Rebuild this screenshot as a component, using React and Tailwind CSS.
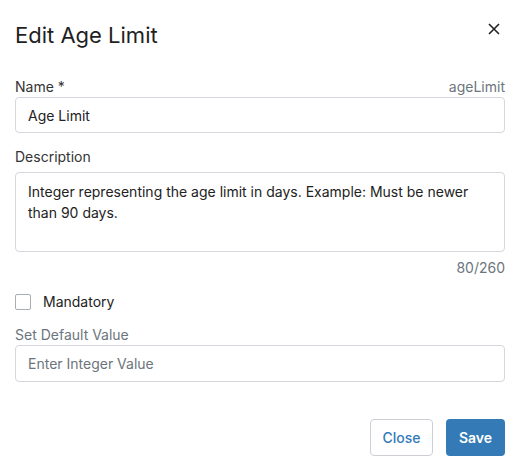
import { useState } from 'react';

const App = () => {
  const [name, setName] = useState('Age Limit');
  const [description, setDescription] = useState(
    'Integer representing the age limit in days. Example: Must be newer than 90 days.'
  );
  const [mandatory, setMandatory] = useState(false);
  const [defaultValue, setDefaultValue] = useState('');

  return (
    <div className="w-[521px] h-[463px] bg-white font-['Inter',sans-serif] text-[#212529] pl-[15px] pr-4 pt-[21px]">
      {/* Header */}
      <div className="flex items-start justify-between">
        <h2 className="text-[22px] leading-[28px] font-normal text-[#1f1f1f]">Edit Age Limit</h2>
        <button className="mt-[2px] mr-[5px] text-[#222]">
          <svg width="12" height="12" viewBox="0 0 12 12" fill="none" stroke="currentColor" strokeWidth="1.6">
            <path d="M1 1L11 11M11 1L1 11" />
          </svg>
        </button>
      </div>

      {/* Name */}
      <div className="mt-[28px] flex items-center justify-between text-[14px] leading-[20px]">
        <label className="text-[#333]">Name *</label>
        <span className="text-[#6c757d]">ageLimit</span>
      </div>
      <input
        value={name}
        onChange={(e) => setName(e.target.value)}
        className="block w-full h-[36px] px-3 border border-[#d4d7dc] rounded-[4px] text-[14px] text-[#222] outline-none"
      />

      {/* Description */}
      <label className="block mt-[14px] mb-[5px] text-[14px] leading-[20px] text-[#333]">Description</label>
      <textarea
        value={description}
        onChange={(e) => setDescription(e.target.value)}
        className="block w-full h-[80px] px-3 pt-[8px] border border-[#d4d7dc] rounded-[4px] text-[14px] leading-[21px] text-[#222] resize-none outline-none"
      />
      <div className="mt-[6px] text-right text-[14px] leading-[20px] text-[#6c757d]">{description.length}/260</div>

      {/* Mandatory */}
      <label className="mt-[14px] flex items-center gap-3 cursor-pointer">
        <input
          type="checkbox"
          checked={mandatory}
          onChange={(e) => setMandatory(e.target.checked)}
          className="appearance-none w-4 h-4 border border-[#a9aeb4] rounded-[2px] bg-white"
        />
        <span className="text-[14px] leading-[20px] text-[#222]">Mandatory</span>
      </label>

      {/* Default value */}
      <label className="block mt-[13px] text-[14px] leading-[20px] text-[#6c757d]">Set Default Value</label>
      <input
        value={defaultValue}
        onChange={(e) => setDefaultValue(e.target.value)}
        placeholder="Enter Integer Value"
        className="block w-full h-[37px] px-3 border border-[#d4d7dc] rounded-[4px] text-[14px] text-[#222] placeholder:text-[#6c757d] outline-none"
      />

      {/* Footer */}
      <div className="mt-[37px] flex justify-end gap-[13px]">
        <button className="w-[63px] h-[37px] border border-[#ccd0d5] rounded-[4px] text-[14px] font-medium text-[#337ab7] bg-white">
          Close
        </button>
        <button className="w-[59px] h-[37px] rounded-[4px] text-[14px] font-semibold text-white bg-[#337ab7]">
          Save
        </button>
      </div>
    </div>
  );
};

export default App;
